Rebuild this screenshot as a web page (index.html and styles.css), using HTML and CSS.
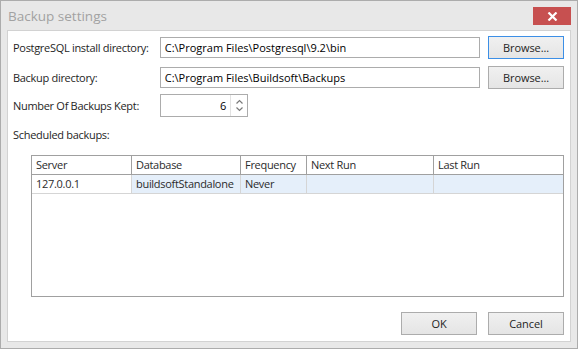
FILE: index.html
```html
<!DOCTYPE html>
<html lang="en">
<head>
  <meta charset="UTF-8">
  <title>Backup settings</title>
  <link rel="stylesheet" href="styles.css">
</head>
<body>

<div class="window">
    <div class="title-bar">
        <span class="title">Backup settings</span>
        <button class="close-btn" aria-label="Close">
            <svg width="11" height="9" viewBox="0 0 11 9">
                <path d="M1.5 0.5 L9.5 8.5 M9.5 0.5 L1.5 8.5" stroke="#fff" stroke-width="2.2"/>
            </svg>
        </button>
    </div>

    <div class="client">
        <div class="form-row">
            <label class="field-label">PostgreSQL install directory:</label>
            <div class="text-box">C:\Program Files\Postgresql\9.2\bin</div>
            <button class="btn btn-focus">Browse...</button>
        </div>

        <div class="form-row row-2">
            <label class="field-label">Backup directory:</label>
            <div class="text-box">C:\Program Files\Buildsoft\Backups</div>
            <button class="btn">Browse...</button>
        </div>

        <div class="form-row row-3">
            <label class="field-label">Number Of Backups Kept:</label>
            <div class="spinner">
                <span class="spin-value">6</span>
                <span class="spin-arrows">
                    <svg width="9" height="6" viewBox="0 0 9 6"><path d="M1.5 4.5 L4.5 1.5 L7.5 4.5" fill="none" stroke="#7a7a7a" stroke-width="1.2"/></svg>
                    <svg width="9" height="6" viewBox="0 0 9 6"><path d="M1.5 1.5 L4.5 4.5 L7.5 1.5" fill="none" stroke="#7a7a7a" stroke-width="1.2"/></svg>
                </span>
            </div>
        </div>

        <div class="section-label">Scheduled backups:</div>

        <div class="grid">
            <div class="grid-head">
                <div class="cell">Server</div>
                <div class="cell">Database</div>
                <div class="cell">Frequency</div>
                <div class="cell">Next Run</div>
                <div class="cell">Last Run</div>
            </div>
            <div class="grid-row">
                <div class="cell cell-current">127.0.0.1</div>
                <div class="cell">buildsoftStandalone</div>
                <div class="cell">Never</div>
                <div class="cell"></div>
                <div class="cell"></div>
            </div>
        </div>

        <div class="dialog-buttons">
            <button class="btn">OK</button>
            <button class="btn">Cancel</button>
        </div>
    </div>
</div>

</body>
</html>
```

FILE: styles.css
```css
* {
    margin: 0;
    padding: 0;
    box-sizing: border-box;
}

body {
    font-family: "Open Sans", "Noto Sans", sans-serif;
    font-size: 11px;
    letter-spacing: -0.3px;
    color: #1e1e1e;
    background: #fff;
}

.window {
    width: 578px;
    height: 349px;
    border: 1px solid #acacac;
    background: #e8e8e8;
    padding: 0 6px 6px 6px;
    display: flex;
    flex-direction: column;
}

.title-bar {
    height: 29px;
    display: flex;
    align-items: flex-start;
    justify-content: space-between;
}

.title {
    font-size: 13.5px;
    letter-spacing: 0;
    color: #a2a2a2;
    margin-top: 6px;
    margin-left: 1px;
}

.close-btn {
    width: 38px;
    height: 18px;
    margin-top: 6px;
    border: none;
    background: #c75050;
    display: flex;
    align-items: center;
    justify-content: center;
}

.client {
    flex: 1;
    background: #fff;
    border: 1px solid #d2d2d2;
    padding: 5px 6px 0 5px;
}

.form-row {
    display: flex;
    align-items: center;
    height: 23px;
}

.row-2 {
    margin-top: 7px;
    height: 22px;
}

.row-3 {
    margin-top: 6px;
}

.field-label {
    width: 147px;
}

.text-box {
    width: 321px;
    height: 21px;
    border: 1px solid #acacac;
    padding: 0 4px;
    line-height: 19px;
    letter-spacing: 0;
    color: #000;
}

.btn {
    width: 76px;
    height: 23px;
    border: 1px solid #acacac;
    background: linear-gradient(#f0f0f0, #e5e5e5);
    font-family: inherit;
    font-size: 11px;
    letter-spacing: -0.1px;
    color: #1e1e1e;
}

.form-row .btn {
    margin-left: 8px;
}

.btn-focus {
    border-color: #3c8fe6;
}

.spinner {
    width: 88px;
    height: 23px;
    border: 1px solid #acacac;
    display: flex;
    align-items: center;
}

.spin-value {
    flex: 1;
    text-align: right;
    padding-right: 4px;
    color: #000;
}

.spin-arrows {
    width: 17px;
    height: 21px;
    border-left: 1px solid #e2e2e2;
    display: flex;
    flex-direction: column;
    align-items: center;
    justify-content: center;
    gap: 1px;
}

.spin-arrows svg {
    display: block;
}

.section-label {
    margin-top: 10px;
    height: 16px;
    line-height: 16px;
}

.grid {
    margin-top: 12px;
    margin-left: 18px;
    width: 533px;
    height: 142px;
    border: 1px solid #a0a0a0;
}

.grid-head,
.grid-row {
    display: grid;
    grid-template-columns: 100px 109px 66px 127px 129px;
    height: 19px;
}

.grid-head {
    border-bottom: 1px solid #a0a0a0;
}

.grid-row {
    background: #e5effa;
    border-bottom: 1px solid #d5d5d5;
}

.cell {
    padding-left: 4px;
    line-height: 18px;
    white-space: nowrap;
    overflow: hidden;
    color: #2b2b2b;
}

.grid-head .cell {
    border-right: 1px solid #a0a0a0;
}

.grid-row .cell {
    border-right: 1px solid #d5d5d5;
}

.grid-head .cell:last-child,
.grid-row .cell:last-child {
    border-right: none;
}

.cell-current {
    background: #fff;
}

.dialog-buttons {
    margin-top: 15px;
    display: flex;
    justify-content: flex-end;
    gap: 11px;
}
```
